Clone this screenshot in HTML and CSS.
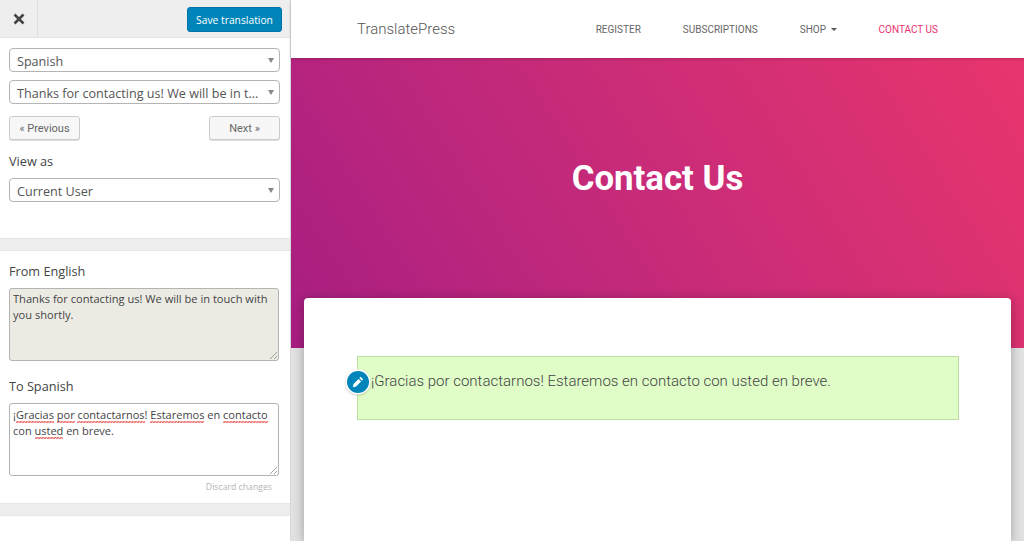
FILE: index.html
```html
<html>
<head>
  <title>TranslatePress</title>
  <link rel="stylesheet" href="styles.css">
</head>
<body>
  <aside class="editor">
    <div class="editor-top">
      <div class="close-box">
        <svg class="close-icon" viewBox="0 0 12 12"><path d="M1.5 1.5l9 9M10.5 1.5l-9 9"></path></svg>
      </div>
      <button class="save-button">Save translation</button>
    </div>

    <div class="panel panel-controls">
      <div class="select-box"><span class="select-text">Spanish</span><i class="select-arrow"></i></div>
      <div class="select-box"><span class="select-text">Thanks for contacting us! We will be in t...</span><i class="select-arrow"></i></div>
      <div class="pager">
        <button class="pager-button">« Previous</button>
        <button class="pager-button">Next »</button>
      </div>
      <div class="field-label">View as</div>
      <div class="select-box"><span class="select-text">Current User</span><i class="select-arrow"></i></div>
    </div>

    <div class="band"></div>

    <div class="panel panel-strings">
      <div class="field-label">From English</div>
      <div class="text-box text-box-source">
        Thanks for contacting us! We will be in touch with you shortly.
        <svg class="grip" viewBox="0 0 8 8"><path d="M1 8l7-7M5 8l3-3"></path></svg>
      </div>
      <div class="field-label label-to">To Spanish</div>
      <div class="text-box text-box-target">
        ¡<span class="typo">Gracias</span> <span class="typo">por</span> <span class="typo">contactarnos</span>! <span class="typo">Estaremos</span> en <span class="typo">contacto</span> con <span class="typo">usted</span> en breve.
        <svg class="grip" viewBox="0 0 8 8"><path d="M1 8l7-7M5 8l3-3"></path></svg>
      </div>
      <div class="discard">Discard changes</div>
    </div>

    <div class="band"></div>
    <div class="panel panel-end"></div>
  </aside>

  <main class="site">
    <nav class="site-nav">
      <div class="brand">TranslatePress</div>
      <ul class="menu">
        <li>REGISTER</li>
        <li>SUBSCRIPTIONS</li>
        <li>SHOP <i class="caret"></i></li>
        <li class="menu-active">CONTACT US</li>
      </ul>
    </nav>
    <header class="hero">
      <h1>Contact Us</h1>
    </header>
    <section class="card">
      <div class="notice">
        <span class="edit-pin">
          <svg viewBox="0 0 12 12"><path d="M8.6 .8l2.6 2.6-1.3 1.3-2.6-2.6zM6.5 2.9l2.6 2.6-5 5-3.3.7.7-3.3z"></path></svg>
        </span>
        ¡Gracias por contactarnos! Estaremos en contacto con usted en breve.
      </div>
    </section>
  </main>
</body>
</html>
```

FILE: styles.css
```css
html, body {
  height: 100%;
  margin: 0;
  overflow: hidden;
}

body {
  display: flex;
  background-color: #e2e2e2;
}

/* left editor */
.editor {
  width: 290px;
  height: 541px;
  flex-shrink: 0;
  border-right: 1px solid #d8d8d8;
  background-color: #fff;
  font-family: "Open Sans", "Noto Sans", sans-serif;
  color: #444;
  display: flex;
  flex-direction: column;
}

.editor-top {
  height: 38px;
  flex-shrink: 0;
  box-sizing: border-box;
  background-color: #eee;
  border-bottom: 1px solid #e4e4e4;
  display: flex;
  justify-content: space-between;
  align-items: flex-start;
  padding-right: 8px;
}

.close-box {
  width: 37px;
  height: 37px;
  border-right: 1px solid #e0e0e0;
  display: flex;
  justify-content: center;
  align-items: center;
}

.close-icon {
  width: 12px;
  height: 12px;
  margin-top: 1px;
  fill: none;
  stroke: #444;
  stroke-width: 2.6;
}

.save-button {
  width: 95px;
  height: 25px;
  margin-top: 7px;
  padding: 0;
  background-color: #0085ba;
  border: 1px solid #0073aa;
  border-radius: 3px;
  color: #fff;
  font-family: "Open Sans", sans-serif;
  font-size: 10.3px;
}

.panel-controls {
  height: 200px;
  flex-shrink: 0;
  box-sizing: border-box;
  padding: 10px 10px 0 9px;
}

.select-box {
  height: 24px;
  box-sizing: border-box;
  border: 1px solid #b4b4b4;
  border-radius: 4px;
  margin-bottom: 8px;
  padding: 0 7px;
  display: flex;
  justify-content: space-between;
  align-items: center;
  font-size: 12.6px;
  color: #555;
}

.select-text {
  white-space: nowrap;
  margin-top: 3px;
}

.select-arrow {
  width: 0;
  height: 0;
  border-left: 3px solid transparent;
  border-right: 3px solid transparent;
  border-top: 5px solid #888;
  margin-right: -2px;
}

.pager {
  display: flex;
  justify-content: space-between;
  margin: 12px 0;
}

.pager-button {
  width: 71px;
  height: 24px;
  padding: 0;
  background-color: #f7f7f7;
  border: 1px solid #ccc;
  border-radius: 3px;
  box-shadow: 0 1px 0 #ddd;
  color: #666;
  font-family: "Roboto", sans-serif;
  font-size: 11px;
}

.field-label {
  font-size: 12.7px;
  line-height: 18px;
  color: #444;
  margin-bottom: 8px;
}

.band {
  height: 13px;
  flex-shrink: 0;
  box-sizing: border-box;
  background-color: #eee;
  border-top: 1px solid #e6e6e6;
  border-bottom: 1px solid #e6e6e6;
}

.panel-strings {
  height: 252px;
  flex-shrink: 0;
  box-sizing: border-box;
  padding: 11px 11px 0 9px;
}

.text-box {
  position: relative;
  height: 73px;
  box-sizing: border-box;
  border: 1px solid #b4b4b4;
  border-radius: 3px;
  padding: 3px 3px;
  font-size: 11.1px;
  line-height: 16px;
  color: #444;
  background-color: #fff;
}

.text-box-source {
  padding-top: 2px;
  background-color: #ebebe4;
}

.text-box-target {
  font-size: 11px;
}

.label-to {
  margin-top: 16px;
}

/* spellcheck squiggle, the native wavy line came out too big */
.typo {
  padding-bottom: 1px;
  background-image:
    linear-gradient(135deg, transparent 40%, #f08080 40%, #f08080 65%, transparent 65%),
    linear-gradient(45deg, transparent 40%, #f08080 40%, #f08080 65%, transparent 65%);
  background-size: 3px 2px;
  background-position: 0 100%, 1.5px 100%;
  background-repeat: repeat-x;
}

.grip {
  position: absolute;
  right: 1px;
  bottom: 1px;
  width: 8px;
  height: 8px;
  fill: none;
  stroke: #888;
  stroke-width: 0.8;
}

.discard {
  margin: 5px 7px 0 0;
  text-align: right;
  font-size: 8.7px;
  line-height: 13px;
  color: #b5b5b5;
}

.panel-end {
  flex: 1;
}

/* right side, the site preview */
.site {
  flex: 1;
  min-width: 0;
  display: flex;
  flex-direction: column;
  font-family: "Roboto", sans-serif;
}

.site-nav {
  height: 58px;
  flex-shrink: 0;
  background-color: #fff;
  display: flex;
  justify-content: space-between;
  align-items: center;
  padding: 0 86px 0 66px;
  box-shadow: 0 1px 3px rgba(0, 0, 0, 0.2);
  position: relative;
}

.brand {
  font-size: 15px;
  font-weight: 300;
  color: #555;
}

.menu {
  list-style: none;
  display: flex;
  gap: 42px;
  margin: 0;
  padding: 0;
  font-size: 10px;
  color: #666;
}

.menu-active {
  color: #e9326f;
}

.caret {
  display: inline-block;
  width: 0;
  height: 0;
  margin-left: 2px;
  vertical-align: middle;
  border-left: 3px solid transparent;
  border-right: 3px solid transparent;
  border-top: 3px solid #555;
}

.hero {
  height: 290px;
  flex-shrink: 0;
  box-sizing: border-box;
  padding-top: 100px;
  background: linear-gradient(58deg, #a81e82 0%, #c72b79 48%, #e8356d 100%);
  text-align: center;
}

.hero h1 {
  margin: 0;
  font-size: 34.8px;
  line-height: 40px;
  font-weight: 700;
  color: #fff;
}

.card {
  flex: 1;
  box-sizing: border-box;
  margin: -50px 13px 0;
  padding: 58px 52px 0 53px;
  background-color: #fff;
  border-radius: 4px 4px 0 0;
  box-shadow: 0 2px 12px rgba(0, 0, 0, 0.3);
  position: relative;
}

.notice {
  position: relative;
  height: 64px;
  box-sizing: border-box;
  padding: 14px 13px;
  background-color: #e0fdc8;
  border: 1px solid #bcdfa0;
  font-size: 15px;
  font-weight: 300;
  line-height: 20px;
  color: #444;
}

.edit-pin {
  position: absolute;
  left: -11px;
  top: 14px;
  width: 22px;
  height: 22px;
  border-radius: 50%;
  background-color: #0085ba;
  box-shadow: 0 0 0 1.5px #fff, 0 1px 3px 1px rgba(0, 0, 0, 0.25);
  display: flex;
  justify-content: center;
  align-items: center;
}

.edit-pin svg {
  width: 12px;
  height: 12px;
  fill: #fff;
}
```
